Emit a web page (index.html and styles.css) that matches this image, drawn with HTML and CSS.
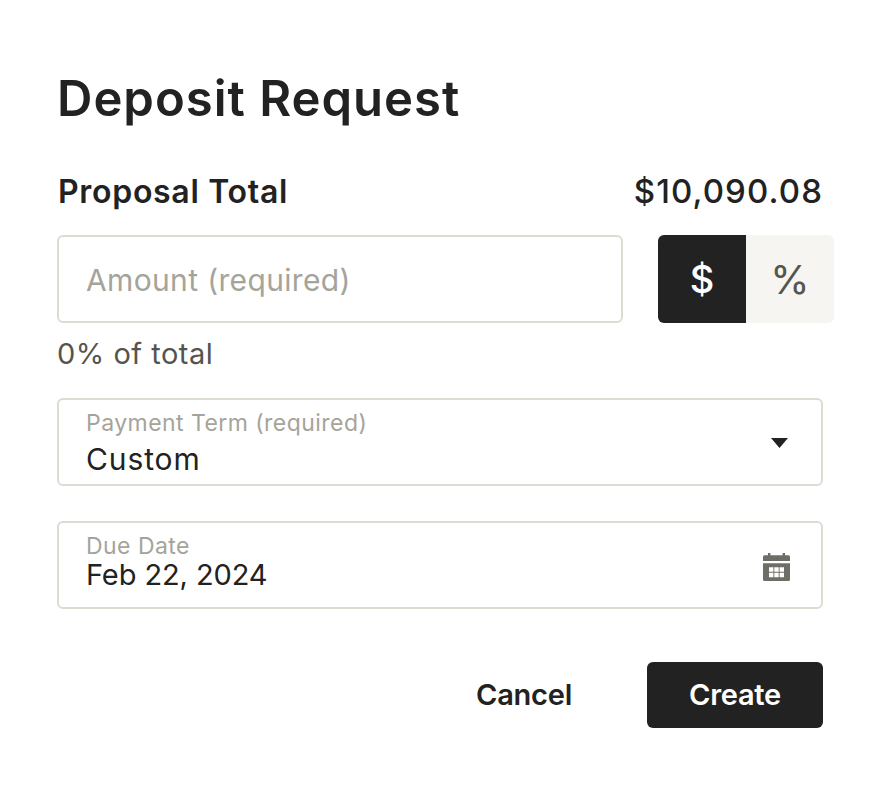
FILE: index.html
```html
<!DOCTYPE html>
<html lang="en">
<head>
<meta charset="utf-8">
<title>Deposit Request</title>
<link rel="stylesheet" href="styles.css">
</head>
<body>
<main class="dialog">
  <h1 class="title">Deposit Request</h1>
  <div class="total-row">
    <span class="total-label">Proposal Total</span>
    <span class="total-value">$10,090.08</span>
  </div>
  <div class="amount-row">
    <div class="field amount"><span class="placeholder">Amount (required)</span></div>
    <div class="toggle">
      <span class="toggle-item active">$</span>
      <span class="toggle-item">%</span>
    </div>
  </div>
  <p class="hint">0% of total</p>
  <div class="field select">
    <div class="field-text">
      <span class="field-label">Payment Term (required)</span>
      <span class="field-value">Custom</span>
    </div>
    <svg class="caret" width="17" height="10" viewBox="0 0 17 10"><path d="M0 0H17L8.500 10Z" fill="#222"/></svg>
  </div>
  <div class="field date">
    <div class="field-text tight">
      <span class="field-label date-label">Due Date</span>
      <span class="field-value date-value">Feb 22, 2024</span>
    </div>
    <svg class="cal" width="27" height="28" viewBox="0 0 27 28"><path fill="#6f6e66" fill-rule="evenodd" d="M5 0h2.400v2.300H19.600V0H22v2.300h3.500a1.500 1.500 0 0 1 1.500 1.500V8H0V3.800a1.500 1.500 0 0 1 1.500-1.500H5zM0 10.300h27v16.200a1.500 1.500 0 0 1-1.500 1.500H1.500a1.500 1.500 0 0 1-1.500-1.500zM6 14.300v4.500h4.400v-4.500zM11.300 14.300v4.500h4.400v-4.500zM16.600 14.300v4.500h4.400v-4.500zM6 19.800v4.500h4.400v-4.500zM11.300 19.800v4.500h4.400v-4.500zM16.600 19.800v4.500h4.400v-4.500z"/></svg>
  </div>
  <div class="actions">
    <button class="btn ghost" type="button">Cancel</button>
    <button class="btn primary" type="button">Create</button>
  </div>
</main>
</body>
</html>
```

FILE: styles.css
```css
* { box-sizing: border-box; }
html, body { margin: 0; background: #fff; }
body {
  width: 886px;
  height: 790px;
  overflow: hidden;
  font-family: "Inter", "Lato", sans-serif;
  color: #222;
}
.dialog { padding: 65px 63px 0 57px; }
.title {
  margin: 0;
  font-size: 49px;
  line-height: 68px;
  font-weight: 600;
  letter-spacing: 1px;
}
.total-row {
  display: flex;
  justify-content: space-between;
  align-items: center;
  margin: 38px 0 0 1px;
  height: 40px;
  font-size: 32px;
}
.total-label { font-weight: 600; letter-spacing: 0.7px; }
.total-value { font-weight: 500; font-size: 33px; letter-spacing: 1.1px; }
.amount-row {
  display: flex;
  margin-top: 24px;
  width: 777px;
  justify-content: space-between;
}
.field {
  border: 2px solid #dddcd2;
  border-radius: 6px;
  height: 88px;
  display: flex;
  align-items: center;
  justify-content: space-between;
  padding: 0 31px 0 27px;
  background: #fff;
}
.amount { width: 566px; padding-top: 2px; }
.placeholder { font-size: 30px; letter-spacing: 0.35px; color: #a5a49a; }
.toggle { display: flex; width: 176px; height: 88px; }
.toggle-item {
  flex: 1;
  display: flex;
  align-items: center;
  justify-content: center;
  font-size: 40px;
  font-weight: 400;
  background: #f6f5f1;
  color: #55544e;
  border-radius: 0 6px 6px 0;
}
.toggle-item.active {
  background: #222;
  color: #fff;
  font-size: 38px;
  font-weight: 500;
  border-radius: 6px 0 0 6px;
}
.hint {
  margin: 12px 0 0;
  font-size: 29px;
  letter-spacing: 0.5px;
  line-height: 38px;
  color: #55544e;
}
.select { margin-top: 25px; }
.date { margin-top: 35px; }
.field-text { display: flex; flex-direction: column; gap: 1px; }
.field-text.tight { gap: 0; padding-bottom: 6px; }
.field-label { font-size: 23px; letter-spacing: 0.45px; line-height: 32px; color: #a5a49a; }
.field-value { font-size: 30px; letter-spacing: 0.9px; line-height: 38px; color: #222; }
.date-label { line-height: 26px; }
.date-value { font-size: 29px; letter-spacing: -0.1px; line-height: 32px; }
.caret { margin: 2px 2px 0 0; }
.cal { margin-top: 3px; }
.actions {
  display: flex;
  justify-content: flex-end;
  align-items: center;
  gap: 75px;
  margin-top: 53px;
}
.btn {
  font-family: inherit;
  font-size: 29px;
  font-weight: 600;
  letter-spacing: -0.25px;
  border: 0;
  border-radius: 6px;
  padding: 0 0 2px;
  height: 66px;
  background: none;
  color: #222;
}
.primary { width: 176px; background: #222; color: #fff; }
```
